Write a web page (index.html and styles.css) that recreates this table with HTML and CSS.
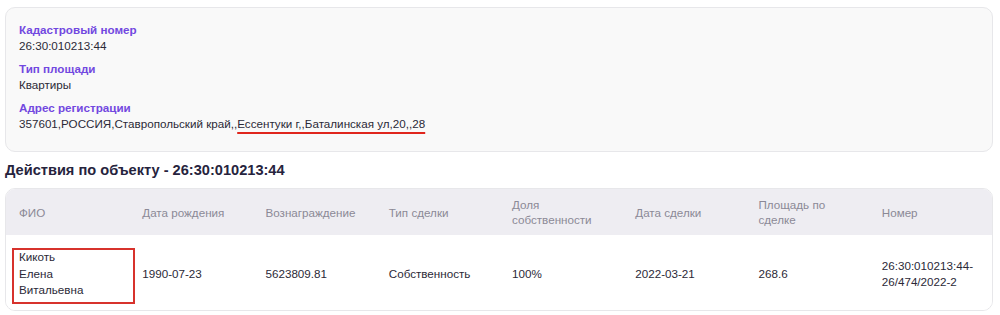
FILE: index.html
```html
<!DOCTYPE html>
<html lang="ru">
<head>
<meta charset="utf-8">
<link rel="stylesheet" href="styles.css">
</head>
<body>
<div class="page">
  <section class="info-card">
    <div class="field">
      <div class="label">Кадастровый номер</div>
      <div class="value">26:30:010213:44</div>
    </div>
    <div class="field">
      <div class="label">Тип площади</div>
      <div class="value">Квартиры</div>
    </div>
    <div class="field">
      <div class="label">Адрес регистрации</div>
      <div class="value">357601,РОССИЯ,Ставропольский край,,<span class="underline">Ессентуки г,,Баталинская ул,20,,28</span></div>
    </div>
  </section>

  <h2 class="title">Действия по объекту - 26:30:010213:44</h2>

  <div class="table-card">
    <table class="deals">
      <thead>
        <tr>
          <th>ФИО</th>
          <th>Дата рождения</th>
          <th>Вознаграждение</th>
          <th>Тип сделки</th>
          <th>Доля<br>собственности</th>
          <th>Дата сделки</th>
          <th>Площадь по<br>сделке</th>
          <th>Номер</th>
        </tr>
      </thead>
      <tbody>
        <tr>
          <td class="name-cell"><span class="highlight"></span>Кикоть<br>Елена<br>Витальевна</td>
          <td>1990-07-23</td>
          <td>5623809.81</td>
          <td>Собственность</td>
          <td>100%</td>
          <td>2022-03-21</td>
          <td>268.6</td>
          <td>26:30:010213:44-<br>26/474/2022-2</td>
        </tr>
      </tbody>
    </table>
  </div>
</div>
</body>
</html>
```

FILE: styles.css
```css
* { box-sizing: border-box; }
html, body { margin: 0; padding: 0; background: #ffffff; }
body {
  font-family: "Liberation Sans", Arial, sans-serif;
  font-size: 11.65px;
  color: #2b2937;
}
.page {
  padding: 7px 7px 0 5px;
}
.info-card {
  background: #f9f9f9;
  border: 1px solid #e7e7ea;
  border-radius: 10px;
  padding: 14px 14px 19px 13px;
  display: flex;
  flex-direction: column;
  gap: 7px;
}
.field { line-height: 16px; }
.label {
  color: #7248e0;
  font-weight: bold;
}
.value { color: #2b2937; }
.underline {
  text-decoration: underline;
  text-decoration-color: #e0261d;
  text-decoration-thickness: 2px;
  text-underline-offset: 4px;
}
.title {
  margin: 8px 0 8px 0;
  font-size: 14.6px;
  line-height: 20px;
  font-weight: bold;
  color: #26233d;
}
.table-card {
  border: 1px solid #e7e7ea;
  border-radius: 10px;
  overflow: hidden;
}
.deals {
  width: 100%;
  border-collapse: collapse;
  table-layout: fixed;
}
.deals th {
  background: #eeedf2;
  color: #8b8996;
  font-weight: normal;
  text-align: left;
  height: 46px;
  padding: 0 14px 0 13px;
  line-height: 15px;
  vertical-align: middle;
}
.deals td {
  height: 75px;
  padding: 0 14px 0 13px;
  line-height: 16.5px;
  padding-top: 3px;
  vertical-align: middle;
  color: #2b2937;
  background: #ffffff;
}
.name-cell { position: relative; }
.highlight {
  position: absolute;
  left: 6px;
  top: 13px;
  width: 123px;
  height: 56px;
  border: 2px solid #d7322c;
}
```
